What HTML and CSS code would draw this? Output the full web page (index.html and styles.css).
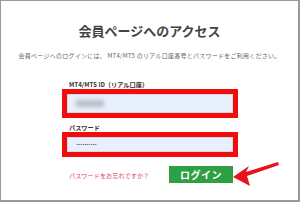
FILE: index.html
```html
<!DOCTYPE html>
<html lang="ja">
<head>
<meta charset="utf-8">
<link rel="stylesheet" href="styles.css">
</head>
<body>
<div class="frame">
  <h1 class="title">会員ページへのアクセス</h1>
  <p class="lead">会員ページへのログインには、 MT4/MT5 のリアル口座番号とパスワードをご利用ください。</p>
  <form class="form">
    <label class="label">MT4/MT5 ID（リアル口座）</label>
    <div class="hl hl-id"><div class="input"><span class="blur"></span></div></div>
    <label class="label label-pw">パスワード</label>
    <div class="hl hl-pw"><div class="input"><span class="dots">••••••••••</span></div></div>
    <div class="actions">
      <span class="forgot">パスワードをお忘れですか？</span>
      <span class="btn">ログイン</span>
    </div>
  </form>
  <svg class="arrow" width="60" height="30" viewBox="0 0 60 30">
    <polygon points="0,15 16,4 13,10 45,0 46,3 14,14 17,24" fill="#e8111c"/>
  </svg>
</div>
</body>
</html>
```
FILE: styles.css
```css
html, body { margin: 0; padding: 0; background: #fff; }
body { font-family: "Noto Sans CJK JP", "Noto Sans", sans-serif; }
.frame {
  position: relative;
  width: 300px; height: 202px;
  box-sizing: border-box;
  border: 1px solid #9a9a9a;
  border-width: 1px 2px 2px 1px;
  overflow: hidden;
}
.title {
  margin: 21px 0 0;
  text-align: center;
  font-size: 13px;
  line-height: 18px;
  font-weight: 700;
  color: #444;
}
.lead {
  margin: 11px 0 0;
  text-align: center;
  font-size: 6px;
  letter-spacing: 0.25px;
  line-height: 10px;
  color: #666;
  white-space: nowrap;
}
.form {
  width: 176px;
  margin: 19px 0 0 61px;
  display: flex;
  flex-direction: column;
}
.label {
  display: block;
  padding-left: 7px;
  font-size: 6.2px;
  line-height: 9px;
  font-weight: 700;
  color: #333;
}
.label-pw { margin-top: 5px; }
.hl {
  border: 5px solid #f20d0d;
  background: #fff;
}
.input {
  height: 17px;
  background: #e8f0fe;
  border: 1px solid #d4dae3;
  display: flex;
  align-items: center;
  padding-left: 8px;
}
.hl-pw .input { height: 13px; }
.blur {
  display: block;
  width: 28px; height: 7px;
  background: #b8bcc4;
  filter: blur(2px);
}
.dots {
  font-size: 4px;
  letter-spacing: -0.3px;
  color: #555;
  font-family: "DejaVu Sans", sans-serif;
}
.actions {
  display: flex;
  align-items: center;
  justify-content: space-between;
  padding: 9px 5px 0 7px;
}
.forgot {
  font-size: 6.2px;
  color: #e3465a;
  margin-top: 1px;
}
.btn {
  width: 64px; height: 17px;
  background: #2ea043;
  color: #fff;
  font-weight: 700;
  font-size: 10px;
  line-height: 17px;
  text-align: center;
  letter-spacing: 0.5px;
}
.arrow { position: absolute; left: 232px; top: 161px; }
```
